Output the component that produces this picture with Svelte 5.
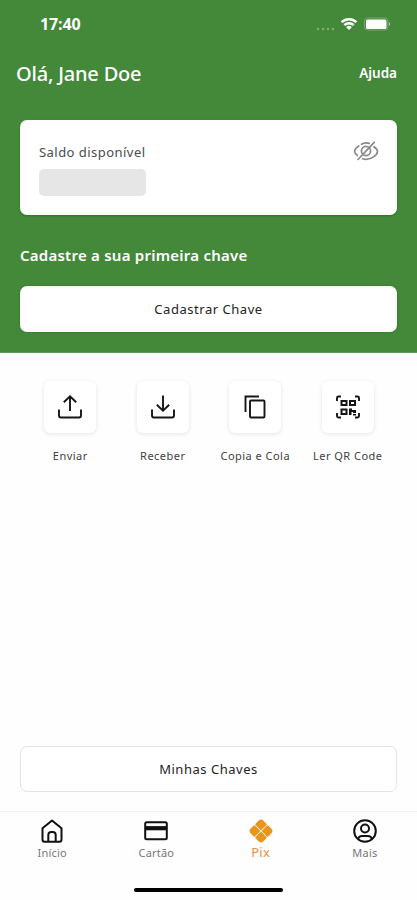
<script lang="ts">
  const actions = [
    { id: "send", label: "Enviar" },
    { id: "receive", label: "Receber" },
    { id: "copy", label: "Copia e Cola" },
    { id: "qr", label: "Ler QR Code" },
  ];

  const tabs = [
    { id: "home", label: "Início" },
    { id: "card", label: "Cartão" },
    { id: "pix", label: "Pix" },
    { id: "more", label: "Mais" },
  ];

  let activeTab = "pix";
</script>

<main>
  <header>
    <div class="status">
      <span class="time">17:40</span>
      <div class="indicators">
        <svg width="20" height="4" viewBox="0 0 20 4" fill="#7bac70">
          <circle cx="3" cy="2" r="1.3" />
          <circle cx="8" cy="2" r="1.3" />
          <circle cx="13" cy="2" r="1.3" />
          <circle cx="18" cy="2" r="1.3" />
        </svg>
        <svg class="wifi" width="18" height="14" viewBox="0 0 18 14" fill="none" stroke="#fff" stroke-width="2.5">
          <path d="M1.6 5.2a10.5 10.5 0 0 1 14.8 0" />
          <path d="M4.4 8.2a6.5 6.5 0 0 1 9.2 0" />
          <path d="M9 13 6.2 10.2a4 4 0 0 1 5.6 0z" fill="#fff" stroke="none" />
        </svg>
        <svg class="battery" width="27" height="14" viewBox="0 0 27 14">
          <rect x=".5" y="1" width="23.5" height="12" rx="3" fill="none" stroke="#74a96b" />
          <rect x="2" y="2.5" width="20.5" height="9.5" rx="1.5" fill="#fff" />
          <path d="M25 5v4c1.6-.7 1.6-3.3 0-4z" fill="#a8caa2" />
        </svg>
      </div>
    </div>

    <div class="greeting">
      <h1>Olá, Jane Doe</h1>
      <button class="help">Ajuda</button>
    </div>

    <section class="balance">
      <div>
        <p>Saldo disponível</p>
        <div class="hidden-value"></div>
      </div>
      <svg width="26" height="22" viewBox="0 0 26 22" fill="none" stroke="#888" stroke-width="1.7" stroke-linecap="round">
        <path d="M8.5 4.2C10 3.2 11.5 2.8 13 2.8c1.2 0 2.200.2 3.200.6" />
        <path d="M5.800 6C3.500 7.500 1.600 9.500 1.600 11.200c0 1.400 1.200 2.900 2.800 4.200" />
        <path d="M21 6.700c2.100 1.500 3.500 3.200 3.500 4.700 0 3.200-6 8-11.500 8-1.200 0-2.300-.2-3.400-.6" />
        <circle cx="13" cy="11" r="4.600" />
        <path d="M21.200 2.300 5 19.500" />
      </svg>
    </section>

    <h2>Cadastre a sua primeira chave</h2>
    <button class="register">Cadastrar Chave</button>
  </header>

  <section class="actions">
    {#each actions as action}
      <button class="action">
        <span class="tile">
          <svg width="26" height="26" viewBox="0 0 26 26" fill="none" stroke="#161616" stroke-width="1.9">
            {#if action.id === "send"}
              <path d="M13 17V2.500M6.800 8.200 13 2.200l6.200 6" />
              <path d="M2 15.500v6q0 2 2 2h18q2 0 2-2v-6" />
            {:else if action.id === "receive"}
              <path d="M13 1.500v15M6.800 10.800l6.200 6 6.200-6" />
              <path d="M2 15.500v6q0 2 2 2h18q2 0 2-2v-6" />
            {:else if action.id === "copy"}
              <path d="M3.500 18V2.500H17" />
              <rect x="8" y="6.500" width="14.500" height="17" rx="1" />
            {:else}
              <path d="M2 7V4q0-1.500 1.500-1.500H6M20 2.500h2.500Q24 2.500 24 4v3M2 19v3q0 1.500 1.500 1.500H6M20 23.500h2.500q1.500 0 1.500-1.500v-3" />
              <path d="M6.500 7h5v4h-5zM15 7h5v4h-5zM6.500 15.500h5v4.500h-5z" stroke-width="2" />
              <path d="M14 14.500h3v1.500h4v3h-3v-1h-1.500v3H14zM18 20h3v1.500h-3z" fill="#161616" stroke="none" />
            {/if}
          </svg>
        </span>
        <span class="action-label">{action.label}</span>
      </button>
    {/each}
  </section>

  <button class="keys">Minhas Chaves</button>

  <nav>
    {#each tabs as tab}
      <button class="tab" class:active={tab.id === activeTab}>
        <svg width="26" height="26" viewBox="0 0 26 26" fill="none" stroke="#111" stroke-width="2">
          {#if tab.id === "home"}
            <path d="M3.500 10.200 13 2.500l9.500 7.700v11.500q0 2-2 2h-15q-2 0-2-2z" stroke-linejoin="round" />
            <path d="M9.300 23.500V17q0-3 3-3h1.400q3 0 3 3v6.500" />
          {:else if tab.id === "card"}
            <rect x="2.200" y="4.300" width="21.600" height="17" rx="1.500" />
            <path d="M2 10.200h22" stroke-width="4.200" />
          {:else if tab.id === "pix"}
            <g fill="#e8951c" stroke="none">
              {#each [45, 135, 225, 315] as angle}
                <path
                  transform="rotate({angle} 13 13)"
                  d="M12.600 12.600V4.900q0-.900-.900-.900H7.500Q4 4 4 7.500v4.200q0 .900.900.900z"
                />
              {/each}
            </g>
          {:else}
            <circle cx="13" cy="13" r="10.800" />
            <circle cx="13" cy="10.500" r="4" />
            <path d="M6 21c.8-2.600 2.300-3 4.200-3h5.600c1.900 0 3.400.4 4.200 3" />
          {/if}
        </svg>
        <span>{tab.label}</span>
      </button>
    {/each}
  </nav>

  <div class="home-bar"></div>
</main>

<style>
  :global(body) {
    margin: 0;
    background: #fefefe;
  }

  main {
    display: flex;
    flex-direction: column;
    height: 900px;
    font-family: "Noto Sans", "Open Sans", sans-serif;
    background: #fefefe;
  }

  button {
    padding: 0;
    border: 0;
    background: none;
    font: inherit;
    color: inherit;
  }

  h1,
  h2,
  p {
    margin: 0;
  }

  header {
    box-sizing: border-box;
    height: 353px;
    padding: 0 20px;
    background: #44883a;
    border-bottom: 1px solid #5f9a56;
    color: #fff;
  }

  .status {
    display: flex;
    justify-content: space-between;
    align-items: center;
    height: 48px;
    padding: 0 6px 0 20px;
  }

  .time {
    font: 700 16px/20px "Open Sans", sans-serif;
    letter-spacing: -0.1px;
  }

  .indicators {
    display: flex;
    align-items: center;
  }

  .indicators svg:first-child {
    margin-top: 9px;
  }

  .wifi {
    margin: 0 6px 0 5px;
  }

  .greeting {
    display: flex;
    justify-content: space-between;
    align-items: center;
    height: 50px;
    margin-left: -4px;
  }

  h1 {
    font-size: 20px;
    font-weight: 500;
    letter-spacing: -0.2px;
  }

  .help {
    font-size: 13.5px;
    font-weight: 600;
  }

  .balance {
    display: flex;
    justify-content: space-between;
    align-items: flex-start;
    box-sizing: border-box;
    height: 95px;
    margin-top: 22px;
    padding: 20px 18px 0 19px;
    border-radius: 7px;
    background: #fff;
    box-shadow: 0 1px 2px #2b7424;
  }

  .balance p {
    font-size: 13px;
    line-height: 24px;
    letter-spacing: 0.46px;
    color: #4b4b4b;
  }

  .hidden-value {
    width: 107px;
    height: 27px;
    margin-top: 5px;
    border-radius: 5px;
    background: #e6e6e6;
  }

  h2 {
    margin-top: 28px;
    font-size: 15px;
    line-height: 24px;
    font-weight: 600;
    letter-spacing: 0.24px;
  }

  .register,
  .keys {
    box-sizing: border-box;
    height: 46px;
    border-radius: 7px;
    background: #fff;
    color: #242424;
    font-size: 13px;
    letter-spacing: 0.53px;
  }

  .register {
    display: block;
    width: 100%;
    margin-top: 19px;
    box-shadow: 0 0 2px #2b7424;
  }

  .actions {
    display: grid;
    grid-template-columns: repeat(4, 92.5px);
    padding: 28px 0 0 24px;
  }

  .action {
    display: flex;
    flex-direction: column;
    align-items: center;
    font-size: 11px;
    letter-spacing: 0.47px;
    color: #424242;
  }

  .tile {
    display: flex;
    align-items: center;
    justify-content: center;
    width: 52px;
    height: 52px;
    border-radius: 6px;
    background: #fff;
    box-shadow: 0 1px 4px rgba(0, 0, 0, 0.11);
  }

  .action-label {
    margin-top: 15px;
    line-height: 16px;
    white-space: nowrap;
  }

  .keys {
    margin: auto 20px 19px;
    border: 1px solid #e3e3e3;
  }

  nav {
    display: grid;
    grid-template-columns: repeat(4, 104.25px);
    box-sizing: border-box;
    height: 76px;
    padding-top: 6px;
    border-top: 1px solid #f1f1f1;
  }

  .tab {
    display: flex;
    flex-direction: column;
    align-items: center;
    justify-content: flex-start;
    font-size: 11px;
    line-height: 16px;
    letter-spacing: 0.2px;
    color: #777;
  }

  .tab span {
    margin-top: 1px;
  }

  .tab.active {
    color: #ee8e48;
    font-size: 13px;
  }

  .tab.active span {
    margin-top: 0;
  }

  .home-bar {
    width: 149px;
    height: 4px;
    margin: 1px auto 8px;
    border-radius: 2px;
    background: #000;
  }
</style>
